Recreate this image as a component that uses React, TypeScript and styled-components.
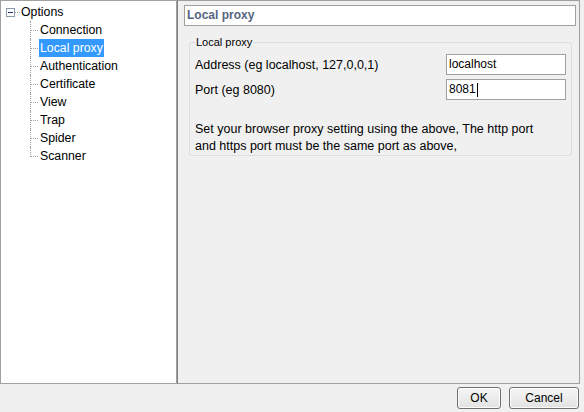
import styled, { createGlobalStyle } from 'styled-components';

const GlobalStyle = createGlobalStyle`
  html, body {
    margin: 0;
    padding: 0;
    background: #f0f0f0;
  }
  body {
    font-family: "Liberation Sans", Arial, sans-serif;
    font-size: 12px;
    color: #000;
  }
`;

const nodes = ['Connection', 'Local proxy', 'Authentication', 'Certificate', 'View', 'Trap', 'Spider', 'Scanner'];
const selected = 'Local proxy';

const SWindow = styled.div`
  width: 584px;
  height: 412px;
  display: flex;
  flex-direction: column;
  overflow: hidden;
`;

const SSplit = styled.div`
  display: flex;
  height: 384px;
`;

const STreePane = styled.div`
  box-sizing: border-box;
  width: 177px;
  background: #fff;
  border: 1px solid #a0a0a0;
  padding-top: 2px;
`;

const SRootRow = styled.div`
  display: flex;
  align-items: center;
  height: 18px;
`;

const SExpander = styled.span`
  box-sizing: border-box;
  width: 9px;
  height: 9px;
  margin-left: 5px;
  border: 1px solid #8a99b0;
  background: #fff;
  display: flex;
  align-items: center;
  justify-content: center;
  &::after {
    content: '';
    width: 5px;
    height: 1px;
    background: #1f2f6f;
  }
`;

const SConnector = styled.span`
  width: 5px;
  border-top: 1px dotted #a0a0a0;
`;

const SChildren = styled.div`
  margin-left: 29px;
`;

const SChildRow = styled.div<{ $last?: boolean }>`
  position: relative;
  display: flex;
  align-items: center;
  height: 18px;
  padding-left: 9px;
  &::before {
    content: '';
    position: absolute;
    left: 0;
    top: 9px;
    width: 8px;
    border-top: 1px dotted #a0a0a0;
  }
  &::after {
    content: '';
    position: absolute;
    left: 0;
    top: 0;
    height: ${(p) => (p.$last ? '10px' : '18px')};
    border-left: 1px dotted #a0a0a0;
  }
`;

const SNodeLabel = styled.span<{ $selected?: boolean }>`
  line-height: 18px;
  padding: 0 1px 0 1px;
  font-size: 12.3px;
  background: ${(p) => (p.$selected ? '#3399ff' : 'transparent')};
  color: ${(p) => (p.$selected ? '#fff' : '#000')};
`;

const SContentPane = styled.div`
  box-sizing: border-box;
  width: 403px;
  border: 1px solid #a0a0a0;
  border-left-color: #808080;
  background: #f0f0f0;
  display: flex;
  flex-direction: column;
`;

const STitle = styled.div`
  box-sizing: border-box;
  height: 21px;
  margin: 4px 3px 0 6px;
  border: 1px solid #a0a0a0;
  background: #fff;
  padding-left: 2px;
  line-height: 19px;
  font-weight: bold;
  color: #55657f;
`;

const SGroup = styled.fieldset`
  margin: 10px 7px 0 11px;
  padding: 5px 5px 0 5px;
  border: 1px solid #d5dfe5;
  border-radius: 3px;
  min-width: 0;
  font-size: 12.5px;
`;

const SLegend = styled.legend`
  font-size: 11px;
  line-height: 13px;
  padding: 0 1px;
`;

const SFormRow = styled.div`
  display: flex;
  align-items: center;
  justify-content: space-between;
  height: 21px;
  & + & {
    margin-top: 4px;
  }
`;

const STextField = styled.div`
  box-sizing: border-box;
  width: 120px;
  height: 21px;
  border: 1px solid #a0a0a0;
  background: #fff;
  padding-left: 2px;
  line-height: 19px;
  font-size: 12px;
  display: flex;
  align-items: center;
`;

const SCaret = styled.span`
  width: 1px;
  height: 14px;
  margin-left: 1px;
  background: #000;
`;

const SNote = styled.p`
  margin: 21px 0 0;
  line-height: 17px;
`;

const SButtonBar = styled.div`
  flex: 1;
  display: flex;
  justify-content: flex-end;
  align-items: center;
  gap: 8px;
  padding-right: 5px;
`;

const SButton = styled.button<{ $width: number }>`
  box-sizing: border-box;
  width: ${(p) => p.$width}px;
  height: 22px;
  border: 1px solid #707070;
  border-radius: 3px;
  background: linear-gradient(#f6f6f6, #e2e2e2);
  box-shadow: inset 0 0 0 1px #fcfcfc;
  font-family: "Liberation Sans", Arial, sans-serif;
  font-size: 12px;
  color: #000;
  padding: 0;
`;

export default function App() {
  return (
    <SWindow>
      <GlobalStyle />
      <SSplit>
        <STreePane>
          <SRootRow>
            <SExpander />
            <SConnector />
            <SNodeLabel>Options</SNodeLabel>
          </SRootRow>
          <SChildren>
            {nodes.map((n, i) => (
              <SChildRow key={n} $last={i === nodes.length - 1}>
                <SNodeLabel $selected={n === selected}>{n}</SNodeLabel>
              </SChildRow>
            ))}
          </SChildren>
        </STreePane>
        <SContentPane>
          <STitle>Local proxy</STitle>
          <SGroup>
            <SLegend>Local proxy</SLegend>
            <SFormRow>
              <span>Address (eg localhost, 127,0,0,1)</span>
              <STextField>localhost</STextField>
            </SFormRow>
            <SFormRow>
              <span>Port (eg 8080)</span>
              <STextField>
                8081
                <SCaret />
              </STextField>
            </SFormRow>
            <SNote>
              Set your browser proxy setting using the above, The http port
              <br />
              and https port must be the same port as above,
            </SNote>
          </SGroup>
        </SContentPane>
      </SSplit>
      <SButtonBar>
        <SButton $width={44}>OK</SButton>
        <SButton $width={70}>Cancel</SButton>
      </SButtonBar>
    </SWindow>
  );
}
